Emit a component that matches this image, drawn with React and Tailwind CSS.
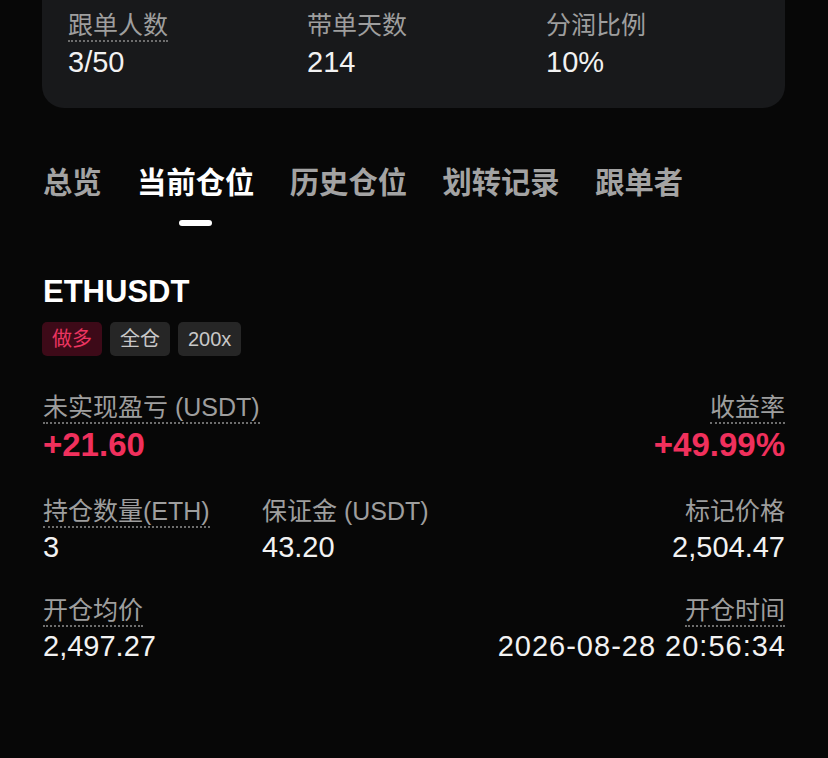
const FONT = { fontFamily: '"Liberation Sans", "Noto Sans CJK SC", sans-serif' };

const tabs = ['总览', '当前仓位', '历史仓位', '划转记录', '跟单者'];

function Label({ children, dotted = true }) {
    return (
        <span
            className={`inline-block text-[25px] leading-[30px] text-[#9e9e9e] border-b-2 border-dotted ${
                dotted ? 'border-[#6e6e6e]' : 'border-transparent'
            }`}
        >
            {children}
        </span>
    );
}

function Stat({ label, value, dotted, right, className = '', valueClass = '' }) {
    return (
        <div className={`flex flex-col ${right ? 'items-end' : 'items-start'} ${className}`}>
            <Label dotted={dotted}>{label}</Label>
            <span className={`mt-[3px] text-[29px] leading-[32px] text-[#f2f2f2] ${valueClass}`}>{value}</span>
        </div>
    );
}

export default function App() {
    return (
        <div className="min-h-[758px] w-[828px] bg-[#070707] overflow-hidden" style={FONT}>
            {/* Summary card */}
            <div className="mx-[42px] h-[108px] w-[743px] rounded-b-[22px] bg-[#18191b] pl-[26px] pt-[10px] flex">
                <div className="w-[240px] flex flex-col items-start">
                    <Label>跟单人数</Label>
                    <span className="mt-[4px] text-[29px] leading-[32px] text-[#f2f2f2]">3/50</span>
                </div>
                <div className="w-[240px] flex flex-col items-start">
                    <Label dotted={false}>带单天数</Label>
                    <span className="mt-[4px] text-[29px] leading-[32px] text-[#f2f2f2]">214</span>
                </div>
                <div className="w-[240px] flex flex-col items-start">
                    <Label dotted={false}>分润比例</Label>
                    <span className="mt-[4px] text-[29px] leading-[32px] text-[#f2f2f2]">10%</span>
                </div>
            </div>

            {/* Tabs */}
            <div className="mt-[55px] px-[43px] flex gap-[35.5px]">
                {tabs.map((t, i) => (
                    <div key={t} className="flex flex-col items-center">
                        <span
                            className={`text-[29.3px] leading-[40px] font-bold ${
                                i === 1 ? 'text-white' : 'text-[#a3a3a3]'
                            }`}
                        >
                            {t}
                        </span>
                        <span
                            className={`mt-[17px] h-[6px] w-[33px] rounded-full ${
                                i === 1 ? 'bg-white' : 'bg-transparent'
                            }`}
                        />
                    </div>
                ))}
            </div>

            {/* Position */}
            <div className="px-[43px]">
                <div className="mt-[48px] text-[31px] leading-[36px] font-bold text-white">ETHUSDT</div>
                <div className="mt-[12px] -ml-px flex gap-[8px]">
                    <span className="h-[34px] px-[10px] rounded-[5px] bg-[#3d0a18] text-[#ec3560] text-[20px] leading-[34px]">做多</span>
                    <span className="h-[34px] px-[10px] rounded-[5px] bg-[#262626] text-[#c8c8c8] text-[20px] leading-[34px]">全仓</span>
                    <span className="h-[34px] px-[10px] rounded-[5px] bg-[#262626] text-[#c8c8c8] text-[20px] leading-[34px]">200x</span>
                </div>

                <div className="mt-[36px] flex justify-between">
                    <div className="flex flex-col items-start">
                        <Label>未实现盈亏 (USDT)</Label>
                        <span className="mt-[2px] text-[33px] leading-[38px] font-semibold text-[#f0305c]">+21.60</span>
                    </div>
                    <div className="flex flex-col items-end">
                        <Label>收益率</Label>
                        <span className="mt-[2px] text-[33px] leading-[38px] font-semibold text-[#f0305c]">+49.99%</span>
                    </div>
                </div>

                <div className="mt-[32px] flex">
                    <Stat className="w-[219px]" label="持仓数量(ETH)" value="3" />
                    <Stat label="保证金 (USDT)" value="43.20" dotted={false} />
                    <Stat className="ml-auto" right label="标记价格" value="2,504.47" dotted={false} />
                </div>

                <div className="mt-[32px] flex justify-between">
                    <Stat label="开仓均价" value="2,497.27" />
                    <Stat right label="开仓时间" value="2026-08-28 20:56:34" valueClass="tracking-[1px] -mr-px" />
                </div>
            </div>
        </div>
    );
}
